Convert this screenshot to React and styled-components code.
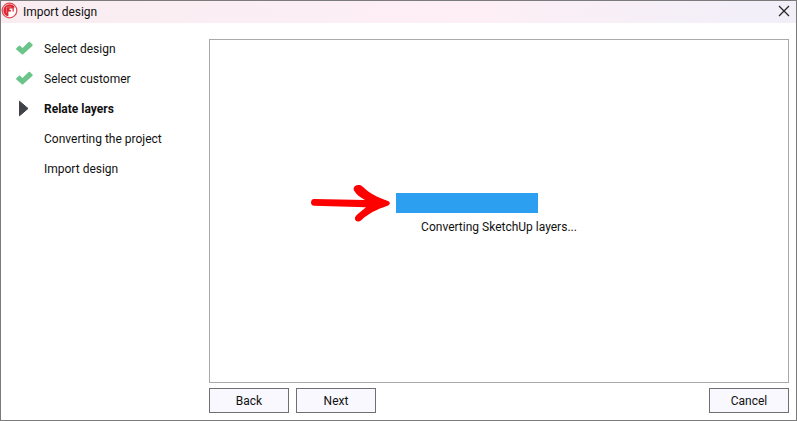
import React from 'react';
import styled, { createGlobalStyle } from 'styled-components';

const GlobalStyle = createGlobalStyle`
	* {
		box-sizing: border-box;
	}

	body {
		margin: 0;
		background-color: #fff;
		color: #111;
		font-family: Roboto, 'Open Sans', sans-serif;
		font-size: 12px;
		line-height: 16px;
	}
`;

const Window = styled.div`
	display: flex;
	flex-direction: column;
	min-height: 100vh;
	border: 1px solid #7b7b7b;
`;

const TitleBar = styled.header`
	display: flex;
	align-items: center;
	height: 22px;
	padding: 0 5px 0 0;
	background: linear-gradient(to right, #f9edf2, #fdeff5 60%, #f3eff8 92%);
`;

const Title = styled.h1`
	flex: 1;
	margin: 0 0 0 5px;
	font-size: 12px;
	font-weight: 400;
	line-height: 16px;
`;

const CloseButton = styled.button`
	display: flex;
	padding: 0 0 2px;
	border: none;
	background: none;
`;

const Body = styled.div`
	display: flex;
	flex: 1;
	padding: 0 7px 7px 14px;
`;

const StepsList = styled.ol`
	flex: 0 0 194px;
	margin: 0;
	padding: 11px 0 0;
	list-style-type: none;
`;

const Step = styled.li`
	display: flex;
	align-items: center;
	height: 30px;
	font-weight: ${props => (props.$current ? 700 : 400)};
`;

const StepIcon = styled.span`
	display: flex;
	flex: 0 0 29px;
`;

const Content = styled.div`
	display: flex;
	flex: 1;
	flex-direction: column;
	padding-top: 16px;
`;

const Panel = styled.main`
	display: flex;
	flex: 1;
	flex-direction: column;
	align-items: center;
	justify-content: center;
	padding-top: 6px;
	border: 1px solid #a9a9a9;
`;

const ProgressGroup = styled.div`
	position: relative;
	display: flex;
	flex-direction: column;
	align-items: center;
	gap: 6px;
`;

const Progress = styled.progress`
	display: block;
	width: 206px;
	height: 20px;
	border: none;
	appearance: none;

	&::-webkit-progress-bar {
		background-color: transparent;
	}

	&::-webkit-progress-value {
		background-color: #2d9ff0;
	}
`;

const PointerArrow = styled.svg`
	position: absolute;
	top: -9px;
	right: 100%;
	margin-right: 5px;
`;

const Footer = styled.footer`
	display: flex;
	gap: 7px;
	margin-top: 5px;
`;

const Button = styled.button`
	width: 80px;
	height: 25px;
	padding: 0;
	border: 1px solid #707070;
	background-color: #f8f8fe;
	color: inherit;
	font: inherit;
`;

const CancelButton = styled(Button)`
	margin-left: auto;
`;

const steps = [
	{ name: 'Select design', status: 'done' },
	{ name: 'Select customer', status: 'done' },
	{ name: 'Relate layers', status: 'current' },
	{ name: 'Converting the project', status: 'pending' },
	{ name: 'Import design', status: 'pending' },
];

const Logo = () => (
	<svg width="17" height="20" viewBox="0 0 17 20" aria-hidden="true">
		<circle cx="8.5" cy="8.5" r="7.3" fill="#fff" stroke="#dc4b52" strokeWidth="1.2" />
		<path
			d="M8.500 2.300A6.200 6.200 0 0 0 7.400 14.600V9.500h2.500V8H8.500V6.500h3V9.500h1.300V5.500h1.100A6.200 6.200 0 0 0 8.500 2.300z"
			fill="#dd2831"
		/>
		<path d="M5.500 5v6M5.500 5h5" fill="none" stroke="#ee8c91" strokeWidth=".7" />
	</svg>
);

const CheckIcon = () => (
	<svg width="19" height="16" viewBox="0 0 19 16" aria-hidden="true">
		<path
			d="M1.300 7.300L3.900 4.700Q4.500 4.200 5.100 4.700L7.500 7L13.600 1.100Q14.300 .6 15 1.100L17.500 3.500Q18 4.100 17.500 4.700L8.200 13.300Q7.500 13.800 6.800 13.300L1.300 8.400Q.9 7.800 1.300 7.300z"
			fill="#6bc58b"
		/>
	</svg>
);

const CurrentIcon = () => (
	<svg width="18" height="18" viewBox="0 0 18 18" aria-hidden="true">
		<path
			d="M4.500 1.200v14.600l8.500-7.300z"
			fill="#404249"
			stroke="#404249"
			strokeLinejoin="round"
		/>
	</svg>
);

const StepMarker = ({ status }) => {
	if (status === 'done') {
		return <CheckIcon />;
	}

	return status === 'current' ? <CurrentIcon /> : null;
};

const App = () => (
	<>
		<GlobalStyle />
		<Window>
			<TitleBar>
				<Logo />
				<Title>Import design</Title>
				<CloseButton type="button" aria-label="Close">
					<svg width="14" height="14" viewBox="0 0 14 14" aria-hidden="true">
						<path d="M2 2l10 10M12 2L2 12" stroke="#222" strokeWidth="1.2" />
					</svg>
				</CloseButton>
			</TitleBar>
			<Body>
				<StepsList>
					{steps.map(({ name, status }) => (
						<Step
							key={name}
							$current={status === 'current'}
							aria-current={status === 'current' ? 'step' : undefined}
						>
							<StepIcon>
								<StepMarker status={status} />
							</StepIcon>
							{name}
						</Step>
					))}
				</StepsList>
				<Content>
					<Panel>
						<ProgressGroup>
							<PointerArrow width="82" height="38" viewBox="0 0 82 38" aria-hidden="true">
								<path
									d="M5 15C1 15.200 1 21.600 5 21.800L57 23.300C53.500 26.500 49.500 29 46.800 32C44 36 48.500 39.500 52.300 36.300C59 29.500 68 25.500 78.500 21.800C81.500 20.300 81.500 18.500 79 17C68 13.200 60 9 53.500 2.500C49.500-1 43 2 45 6.400C47.500 10.500 51.500 13.500 56 16z"
									fill="#fe0000"
								/>
							</PointerArrow>
							<Progress id="conversion" value="142" max="206" />
							<label htmlFor="conversion">Converting SketchUp layers...</label>
						</ProgressGroup>
					</Panel>
					<Footer>
						<Button type="button">Back</Button>
						<Button type="button">Next</Button>
						<CancelButton type="button">Cancel</CancelButton>
					</Footer>
				</Content>
			</Body>
		</Window>
	</>
);

export default App;
